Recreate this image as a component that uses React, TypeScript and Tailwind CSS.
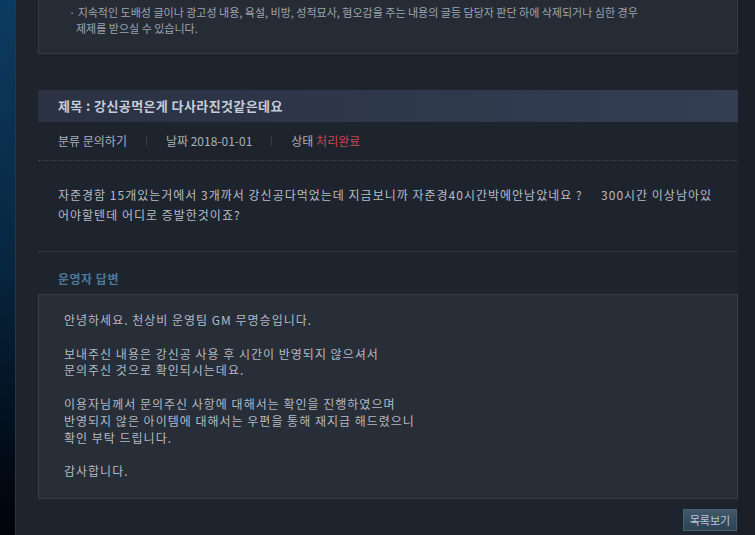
import React from "react";

const FONT = "font-['Noto_Sans_CJK_KR',_'Noto_Sans',_sans-serif]";

const ANSWER_LINES = [
  "안녕하세요. 천상비 운영팀 GM 무명승입니다.",
  "",
  "보내주신 내용은 강신공 사용 후 시간이 반영되지 않으셔서",
  "문의주신 것으로 확인되시는데요.",
  "",
  "이용자님께서 문의주신 사항에 대해서는 확인을 진행하였으며",
  "반영되지 않은 아이템에 대해서는 우편을 통해 재지급 해드렸으니",
  "확인 부탁 드립니다.",
  "",
  "감사합니다.",
];

function Sep() {
  return <span className="mx-[19px] h-[10px] w-px bg-[#363c46]" />;
}

export default function App() {
  return (
    <div className={`flex h-[535px] w-[755px] overflow-hidden bg-[#1e242d] ${FONT}`}>
      {/* left rail */}
      <div className="w-[16px] shrink-0 border-r border-[#2f343b] bg-gradient-to-b from-[#0c3b61] via-[#072640] to-[#010409]" />

      {/* main column */}
      <div className="w-[722px] shrink-0 pl-[22px]">
        {/* notice box */}
        <div className="border-x border-b border-[#353b46] bg-[#262c36] pb-[17px] pl-[30px] pt-[4px] text-[11px] leading-[16px] text-[#9ea4ae]">
          <p>· 지속적인 도배성 글이나 광고성 내용, 욕설, 비방, 성적묘사, 혐오감을 주는 내용의 글등 담당자 판단 하에 삭제되거나 심한 경우</p>
          <p className="pl-[7px]">제제를 받으실 수 있습니다.</p>
        </div>

        {/* title bar */}
        <div className="mt-[36px] flex h-[32px] items-center bg-gradient-to-r from-[#2a3243] to-[#333e53] pl-[20px]">
          <h1 className="text-[13px] font-bold tracking-[0.4px] text-[#c6ccd9]">제목 : 강신공먹은게 다사라진것같은데요</h1>
        </div>

        {/* meta */}
        <div className="flex h-[39px] items-center border-b border-dotted border-[#3f4652] pl-[20px] text-[12px] text-[#a9b0ba]">
          <span>분류 문의하기</span>
          <Sep />
          <span>날짜 2018-01-01</span>
          <Sep />
          <span>
            상태 <span className="text-[#c8474c]">처리완료</span>
          </span>
        </div>

        {/* question body */}
        <div className="border-b border-dotted border-[#3f4652] pb-[26px] pl-[20px] pt-[24px] text-[12px] leading-[20px] tracking-[1px] text-[#b6bcc6]">
          자준경함 15개있는거에서 3개까서 강신공다먹었는데 지금보니까 자준경40시간박에안남았네요 ?&nbsp;&nbsp;&nbsp;&nbsp; 300시간 이상남아있
          <br />
          어야할텐데 어디로 증발한것이죠?
        </div>

        {/* answer */}
        <h2 className="pb-[6px] pl-[20px] pt-[18px] text-[12px] font-bold leading-[18px] tracking-[0.5px] text-[#4e7898]">운영자 답변</h2>
        <div className="h-[205px] border border-[#363c47] bg-[#282e38] pl-[25px] pt-[17px] text-[12px] leading-[16.8px] tracking-[1px] text-[#b3b9c3]">
          {ANSWER_LINES.map((line, i) => (
            <p key={i} className="h-[16.8px]">
              {line}
            </p>
          ))}
        </div>

        <div className="mt-[10px] flex justify-end pr-px">
          <button className="h-[22px] w-[54px] border border-[#4a5e70] bg-gradient-to-b from-[#40576c] to-[#2e4254] text-[11px] text-[#b9c7d3]">
            목록보기
          </button>
        </div>
      </div>

      {/* right rail */}
      <div className="flex-1 bg-[#1b2028]" />
    </div>
  );
}
